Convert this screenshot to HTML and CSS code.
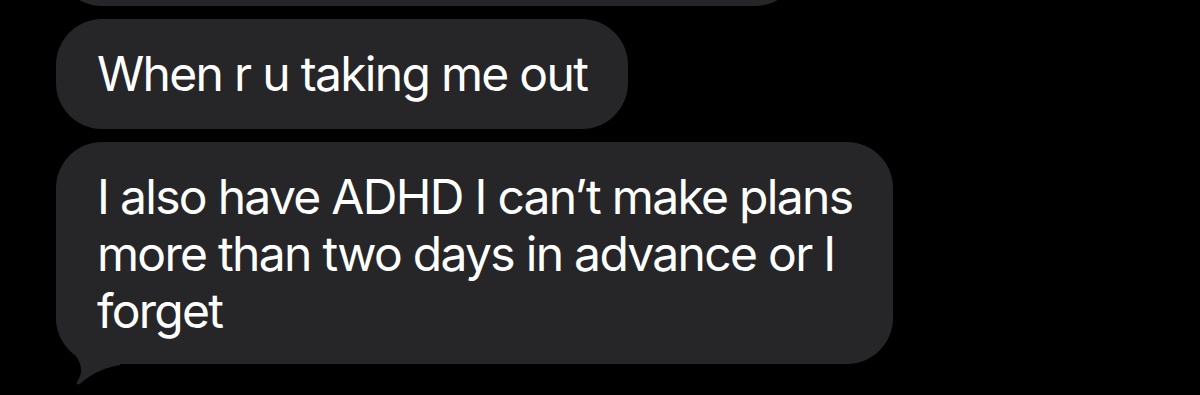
FILE: index.html
```html
<!DOCTYPE html>
<html lang="en">
<head>
    <meta charset="UTF-8">
    <meta name="viewport" content="width=device-width, initial-scale=1.0">
    <title>Messages</title>
    <link rel="stylesheet" href="styles.css">
</head>
<body>
    <div class="thread">
        <div class="bubble bubble-cut"></div>
        <div class="bubble">When r u taking me out</div>
        <div class="bubble bubble-last">
            I also have ADHD I can’t make plans more than two days in advance or I forget
            <svg class="tail" viewBox="0 0 64 66" width="64" height="66" aria-hidden="true">
                <path d="M1 0 C1 12 6 22 14 30 C22 38 26 46 25 54 C24 58 22 61 21 63 C20 66 23 66 25 64 C31 59 41 50 64 46 L64 0 Z" fill="#262628"/>
            </svg>
        </div>
    </div>
</body>
</html>
```

FILE: styles.css
```css
html, body {
    margin: 0;
    background-color: #000;
}
body {
    font-family: "Inter", "Liberation Sans", sans-serif;
    color: #fff;
    overflow: hidden;
    height: 395px;
}
.thread {
    display: flex;
    flex-direction: column;
    align-items: flex-start;
    gap: 13px;
    padding: 0 56px;
}
.bubble {
    position: relative;
    isolation: isolate;
    background-color: #262628;
    border-radius: 46px;
    padding: 26px 41px 27px 41px;
    font-size: 48px;
    line-height: 57px;
    letter-spacing: -1.7px;
    max-width: 760px;
}
.bubble-cut {
    width: 745px;
    height: 57px;
    margin-top: -104px;
    padding-left: 0;
    padding-right: 0;
}
.bubble-last {
    padding-right: 36px;
    padding-bottom: 25px;
}
.tail {
    position: absolute;
    left: 0;
    bottom: -21px;
    z-index: -1;
}
```
